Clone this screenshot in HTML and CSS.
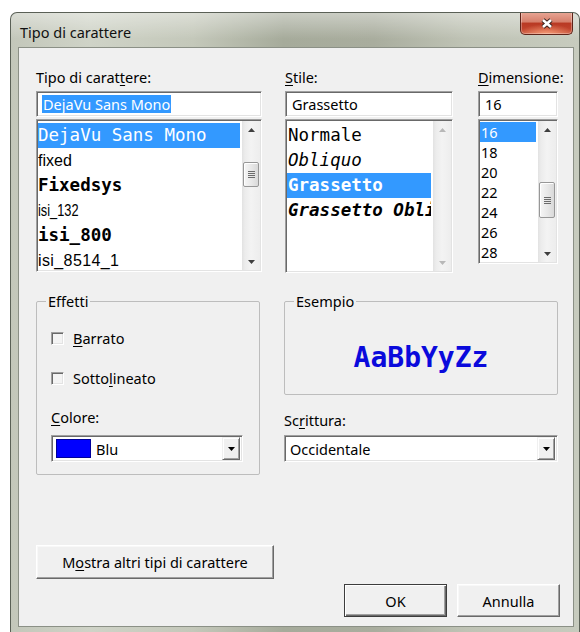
FILE: index.html
```html
<!DOCTYPE html>
<html lang="it">
<head>
<meta charset="utf-8">
<title>Tipo di carattere</title>
<link rel="stylesheet" href="styles.css">
</head>
<body>
<div class="window">
  <header class="titlebar">
    <span class="title">Tipo di carattere</span>
    <button class="close" type="button" aria-label="Chiudi">
      <svg width="16" height="13" viewBox="0 0 16 13">
        <path class="x-edge" d="M4 3 L12 10 M12 3 L4 10"/>
        <path class="x-face" d="M4 3 L12 10 M12 3 L4 10"/>
      </svg>
    </button>
  </header>

  <main class="client">
    <section class="pickers">
      <div class="picker col-font">
        <div class="lbl">Tipo di carat<u>t</u>ere:</div>
        <div class="field"><span class="hl">DejaVu Sans Mono</span></div>
        <div class="listbox lb-font">
          <ul class="items">
            <li class="on f-mono">DejaVu Sans Mono</li>
            <li class="f-fixed">fixed</li>
            <li class="f-mono-bold">Fixedsys</li>
            <li class="f-narrow">isi_132</li>
            <li class="f-mono-bold">isi_800</li>
            <li class="f-wide">isi_8514_1</li>
          </ul>
          <div class="vscroll">
            <span class="sbtn"><svg class="tri" width="7" height="4" viewBox="0 0 7 4"><path d="M0 4 3.5 0 7 4z"/></svg></span>
            <span class="track"><span class="thumb thumb-font"><svg class="grip" width="7" height="7" viewBox="0 0 7 7"><path d="M0 .5h7M0 2.5h7M0 4.5h7M0 6.5h7"/></svg></span></span>
            <span class="sbtn"><svg class="tri" width="7" height="4" viewBox="0 0 7 4"><path d="M0 0 3.5 4 7 0z"/></svg></span>
          </div>
        </div>
      </div>

      <div class="picker col-style">
        <div class="lbl"><u>S</u>tile:</div>
        <div class="field">Grassetto</div>
        <div class="listbox lb-style">
          <ul class="items mono-items">
            <li>Normale</li>
            <li class="it">Obliquo</li>
            <li class="on bd">Grassetto</li>
            <li class="bd it">Grassetto Obliquo</li>
          </ul>
          <div class="vscroll off">
            <span class="sbtn"><svg class="tri" width="7" height="4" viewBox="0 0 7 4"><path d="M0 4 3.5 0 7 4z"/></svg></span>
            <span class="track"></span>
            <span class="sbtn"><svg class="tri" width="7" height="4" viewBox="0 0 7 4"><path d="M0 0 3.5 4 7 0z"/></svg></span>
          </div>
        </div>
      </div>

      <div class="picker col-size">
        <div class="lbl"><u>D</u>imensione:</div>
        <div class="field">16</div>
        <div class="listbox lb-size">
          <ul class="items size-items">
            <li class="on">16</li>
            <li>18</li>
            <li>20</li>
            <li>22</li>
            <li>24</li>
            <li>26</li>
            <li>28</li>
          </ul>
          <div class="vscroll">
            <span class="sbtn"><svg class="tri" width="7" height="4" viewBox="0 0 7 4"><path d="M0 4 3.5 0 7 4z"/></svg></span>
            <span class="track"><span class="thumb thumb-size"><svg class="grip" width="7" height="7" viewBox="0 0 7 7"><path d="M0 .5h7M0 2.5h7M0 4.5h7M0 6.5h7"/></svg></span></span>
            <span class="sbtn"><svg class="tri" width="7" height="4" viewBox="0 0 7 4"><path d="M0 0 3.5 4 7 0z"/></svg></span>
          </div>
        </div>
      </div>
    </section>

    <section class="options">
      <fieldset class="group effects">
        <legend>Effetti</legend>
        <div class="check"><span class="box"></span><span><u>B</u>arrato</span></div>
        <div class="check second"><span class="box"></span><span>Sotto<u>l</u>ineato</span></div>
        <div class="lbl color-lbl"><u>C</u>olore:</div>
        <div class="combo color-combo">
          <span class="swatch"></span>
          <span class="combo-text">Blu</span>
          <span class="drop"><svg width="7" height="4" viewBox="0 0 7 4"><path d="M0 0 3.5 4 7 0z"/></svg></span>
        </div>
      </fieldset>

      <div class="preview-col">
        <fieldset class="group sample">
          <legend>Esempio</legend>
          <div class="sample-text">AaBbYyZz</div>
        </fieldset>
        <div class="lbl script-lbl">Sc<u>r</u>ittura:</div>
        <div class="combo script-combo">
          <span class="combo-text">Occidentale</span>
          <span class="drop"><svg width="7" height="4" viewBox="0 0 7 4"><path d="M0 0 3.5 4 7 0z"/></svg></span>
        </div>
      </div>
    </section>

    <div class="more-row">
      <button class="btn more" type="button">M<u>o</u>stra altri tipi di carattere</button>
    </div>

    <div class="actions">
      <button class="btn default" type="button">OK</button>
      <button class="btn" type="button">Annulla</button>
    </div>
  </main>
</div>
</body>
</html>
```

FILE: styles.css
```css
* { box-sizing: border-box; }

html, body {
  margin: 0;
  padding: 0;
  width: 580px;
  height: 632px;
  overflow: hidden;
  background: #fff;
}

body {
  font-family: "Noto Sans", "Open Sans", "DejaVu Sans", sans-serif;
  font-size: 14.5px;
  line-height: 20px;
  color: #000;
}

u { text-decoration-thickness: 1px; text-underline-offset: 2px; }

/* ---------- window frame ---------- */
.window {
  margin: 12px 0 0 10px;
  width: 570px;
  height: 626px;
  border: 1px solid #5a6056;
  border-bottom: 0;
  border-radius: 7px 7px 0 0;
  background:
    linear-gradient(to bottom, rgba(255,255,255,.4), rgba(255,255,255,0) 26px),
    linear-gradient(to right, #c3c7ba 0%, #cfd3c7 14%, #c4c8ba 32%, #a6ab9b 48%, #a9ad9e 64%, #bfc3b5 80%, #c7cbbe 100%);
  overflow: hidden;
}

.titlebar {
  display: flex;
  align-items: flex-start;
  height: 34px;
  padding-left: 9px;
}

.title {
  margin-top: 9px;
  line-height: 20px;
  color: #111;
}

.close {
  margin: -1px 6px 0 auto;
  width: 53px;
  height: 23px;
  padding: 0;
  border: 1px solid #5e241a;
  border-top: 0;
  border-radius: 0 0 5px 5px;
  background:
    radial-gradient(ellipse 55% 45% at 50% 100%, rgba(255,170,130,.8), rgba(255,170,130,0)),
    linear-gradient(to bottom, #e9a897 0%, #d6806c 44%, #b93a24 52%, #c0432c 78%, #cc5e45 100%);
  box-shadow: inset 0 0 0 1px rgba(255,255,255,.3);
  display: flex;
  align-items: center;
  justify-content: center;
}

.close .x-edge { stroke: #3e241e; stroke-width: 4.6; fill: none; }
.close .x-face { stroke: #fff; stroke-width: 2.6; fill: none; }

/* ---------- client area ---------- */
.client {
  margin: 0 5px 0 7px;
  height: 580px;
  border: 1px solid #8b9086;
  background: #f0f0f0;
  padding: 19px 0 0 17px;
}

.lbl {
  height: 20px;
  line-height: 20px;
  white-space: nowrap;
}

/* sunken edit fields and list boxes */
.field, .listbox, .combo, .box {
  background: #fff;
  border: 1px solid;
  border-color: #a0a0a0 #fff #fff #a0a0a0;
  box-shadow: inset 1px 1px 0 #696969, inset -1px -1px 0 #e3e3e3;
}

.pickers {
  display: grid;
  grid-template-columns: 226px 168px 80px;
  column-gap: 23px;
  height: 206px;
}
.col-size { margin-left: 2px; width: 80px; }
.col-style { width: 168px; }

.picker { display: flex; flex-direction: column; }

.field {
  margin-top: 4px;
  height: 26px;
  display: flex;
  align-items: center;
  padding-left: 6px;
  white-space: nowrap;
  overflow: hidden;
}

.hl {
  background: #3399ff;
  color: #fff;
  line-height: 18px;
  padding: 0 1px;
  margin-left: -1px;
}

.listbox {
  margin-top: 2px;
  display: flex;
  padding: 1px;
  overflow: hidden;
}
.lb-font { height: 153px; }
.lb-style { height: 154px; }
.lb-size { height: 145px; }

.items {
  flex: 1;
  list-style: none;
  margin: 0;
  padding: 2px 0 0;
  overflow: hidden;
  min-width: 0;
}
.items li {
  height: 25px;
  line-height: 25px;
  white-space: nowrap;
}
.items li.on { background: #3399ff; color: #fff; }

.f-mono { font-family: "DejaVu Sans Mono", monospace; font-size: 17.5px; }
.f-mono-bold { font-family: "DejaVu Sans Mono", monospace; font-size: 17.5px; font-weight: bold; }
.f-fixed { font-family: "Liberation Sans", sans-serif; font-size: 16px; }
.f-narrow {
  font-family: "Liberation Sans", sans-serif;
  font-size: 16px;
  transform: scaleX(.8);
  transform-origin: left center;
}
.f-wide { font-family: "Liberation Sans", sans-serif; font-size: 16px; letter-spacing: 0.4px; }

.mono-items li { font-family: "DejaVu Sans Mono", monospace; font-size: 17.5px; padding-left: 1px; }
.mono-items .it { font-style: oblique; }
.mono-items .bd { font-weight: bold; }

.size-items { padding-top: 1px; }
.size-items li { height: 20px; line-height: 20px; padding-left: 1px; }

/* scroll bars */
.vscroll {
  width: 18px;
  margin-left: 2px;
  display: flex;
  flex-direction: column;
  background: linear-gradient(to right, #e2e2e2 0, #ececec 3px, #f3f3f3 50%, #ededed 100%);
}
.sbtn {
  height: 17px;
  display: flex;
  align-items: center;
  justify-content: center;
  flex: none;
}
.tri { fill: #3f3f3f; }
.vscroll.off .tri { fill: #b8b8b8; }
.track { flex: 1; display: flex; flex-direction: column; }
.thumb {
  margin: 0 1px;
  border: 1px solid #979797;
  border-radius: 2px;
  background: linear-gradient(to right, #f6f6f6, #e6e6e6 60%, #d9d9d9);
  box-shadow: inset 1px 1px 0 #fff;
  display: flex;
  align-items: center;
  justify-content: center;
}
.thumb-font { margin-top: 24px; height: 25px; }
.thumb-size { margin-top: 44px; height: 36px; }
.grip { stroke: #6b6b6b; stroke-width: 1; }

/* ---------- effects / sample ---------- */
.options {
  display: flex;
  margin-top: 19px;
  align-items: flex-start;
}

.group {
  margin: 0;
  min-width: 0;
  border: 1px solid #bdbdbd;
  border-radius: 2px;
}
.group legend {
  padding: 0 2px;
  line-height: 18px;
  height: 18px;
}

.effects {
  width: 224px;
  padding: 18px 16px 12px 14px;
}
.effects legend { margin-left: -5px; }

.check {
  display: flex;
  align-items: center;
  gap: 9px;
  height: 20px;
}
.check.second { margin-top: 20px; }
.box {
  width: 13px;
  height: 13px;
  background: #f4f4f4;
}

.color-lbl { margin-top: 19px; }

.combo {
  height: 27px;
  display: flex;
  align-items: center;
  padding: 1px 2px 1px 1px;
  white-space: nowrap;
}
.color-combo { margin-top: 8px; }
.swatch {
  width: 35px;
  height: 19px;
  margin-left: 3px;
  background: #0000ff;
  box-shadow: inset 0 0 0 1px #00009a;
}
.combo-text { margin-left: 5px; }
.drop {
  margin-left: auto;
  width: 18px;
  height: 23px;
  background: #f0f0f0;
  border: 1px solid;
  border-color: #f0f0f0 #696969 #696969 #f0f0f0;
  box-shadow: inset 1px 1px 0 #fff, inset -1px -1px 0 #a0a0a0;
  display: flex;
  align-items: center;
  justify-content: center;
}
.drop svg { fill: #000; }

.preview-col {
  margin-left: 24px;
  width: 274px;
  display: flex;
  flex-direction: column;
}
.sample { padding: 0; }
.sample legend { margin-left: 9px; }
.sample-text {
  height: 84px;
  padding-top: 12px;
  line-height: 72px;
  text-align: center;
  font-family: "DejaVu Sans Mono", monospace;
  font-weight: bold;
  font-size: 28px;
  color: #0a0adc;
}
.script-lbl { margin-top: 15px; }
.script-combo { margin-top: 5px; }
.script-combo .combo-text { margin-left: 4px; }

/* ---------- buttons ---------- */
.more-row { margin-top: 70px; }

.btn {
  font: inherit;
  color: #000;
  background: #f0f0f0;
  border: 1px solid;
  border-color: #fff #696969 #696969 #fff;
  box-shadow: inset -1px -1px 0 #a0a0a0, inset 1px 1px 0 #f8f8f8;
  padding: 0;
  line-height: 20px;
}
.more { width: 238px; height: 34px; }

.actions {
  margin-top: 5px;
  width: 524px;
  display: flex;
  justify-content: flex-end;
  gap: 10px;
}
.actions .btn { width: 103px; height: 33px; }
.btn.default {
  border-color: #3c3c3c;
  box-shadow: inset 1px 1px 0 #fff, inset -1px -1px 0 #696969, inset -2px -2px 0 #a0a0a0;
}
```
